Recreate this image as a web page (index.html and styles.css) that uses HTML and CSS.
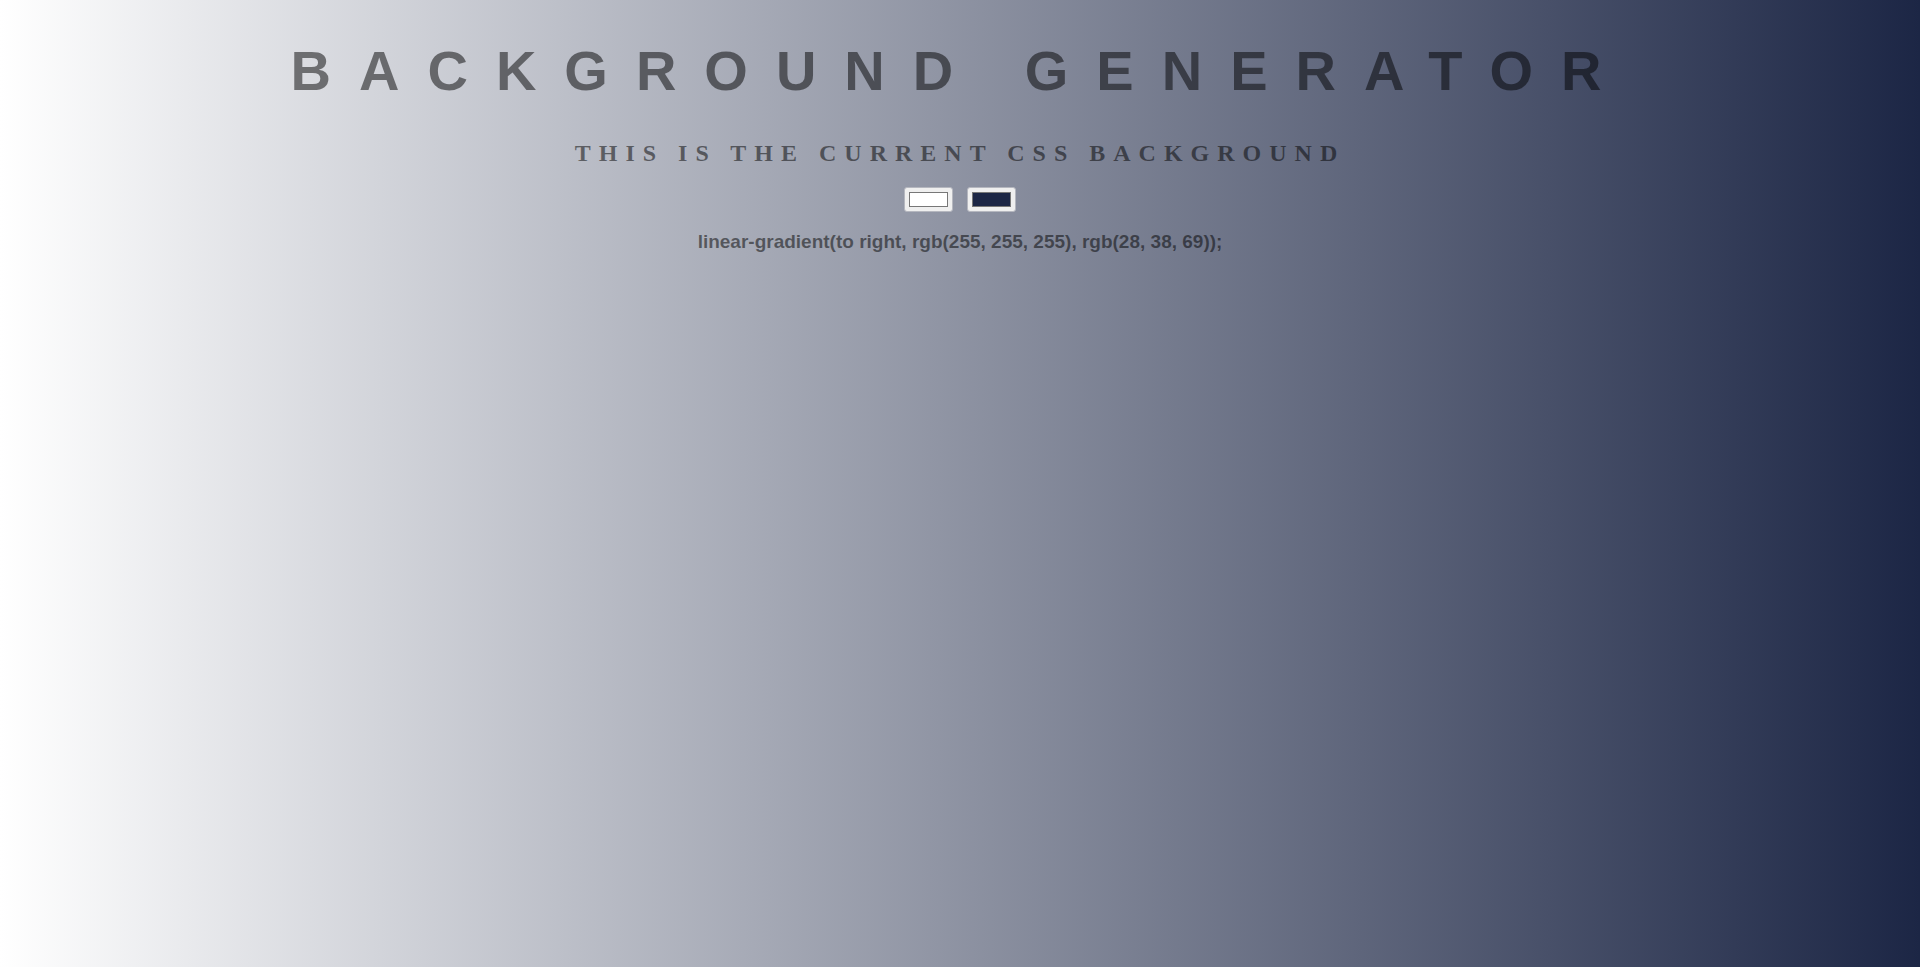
FILE: index.html
```html
<!DOCTYPE html>
<html lang="en">
<head>
<meta charset="utf-8">
<title>Background Generator</title>
<link rel="stylesheet" href="styles.css">
</head>
<body class="page">
  <h1 class="title">Background Generator</h1>
  <h2 class="subtitle">This is the current CSS background</h2>
  <div class="pickers">
    <input class="picker" type="color" name="color1" value="#ffffff">
    <input class="picker" type="color" name="color2" value="#1c2645">
  </div>
  <h3 class="output">linear-gradient(to right, rgb(255, 255, 255), rgb(28, 38, 69));</h3>
</body>
</html>
```

FILE: styles.css
```css
html {
  background: linear-gradient(to right, rgb(255, 255, 255), rgb(28, 38, 69));
  min-height: 100%;
}

.page {
  margin: 0 8px 8px;
  font-family: "Liberation Serif", "Times New Roman", serif;
  color: rgba(0, 0, 0, 0.5);
  text-align: center;
  text-transform: uppercase;
  letter-spacing: 0.5em;
}

.title {
  font: bold 56px "Liberation Sans", Arial, sans-serif;
  color: rgba(0, 0, 0, 0.5);
  letter-spacing: 0.5em;
  margin: 37.5px 0;
}

.subtitle {
  font-family: "Liberation Serif", "Times New Roman", serif;
  font-weight: bold;
  font-size: 24px;
  margin: 0.83em 0;
}

.pickers {
  display: flex;
  justify-content: center;
  gap: 14px;
}

.picker {
  -webkit-appearance: none;
  appearance: none;
  box-sizing: border-box;
  width: 49px;
  height: 25px;
  margin: 0;
  padding: 4px 4px;
  border: 1px solid #b5b7bf;
  border-radius: 3px;
  background: #efefef;
  cursor: pointer;
}

.picker::-webkit-color-swatch-wrapper {
  padding: 0;
}

.picker::-webkit-color-swatch {
  border: 1px solid #777777;
  border-radius: 0;
}

.output {
  font-family: "Liberation Sans", Arial, sans-serif;
  font-weight: bold;
  font-size: 19px;
  text-transform: none;
  letter-spacing: normal;
  margin: 18.72px 0;
}
```
